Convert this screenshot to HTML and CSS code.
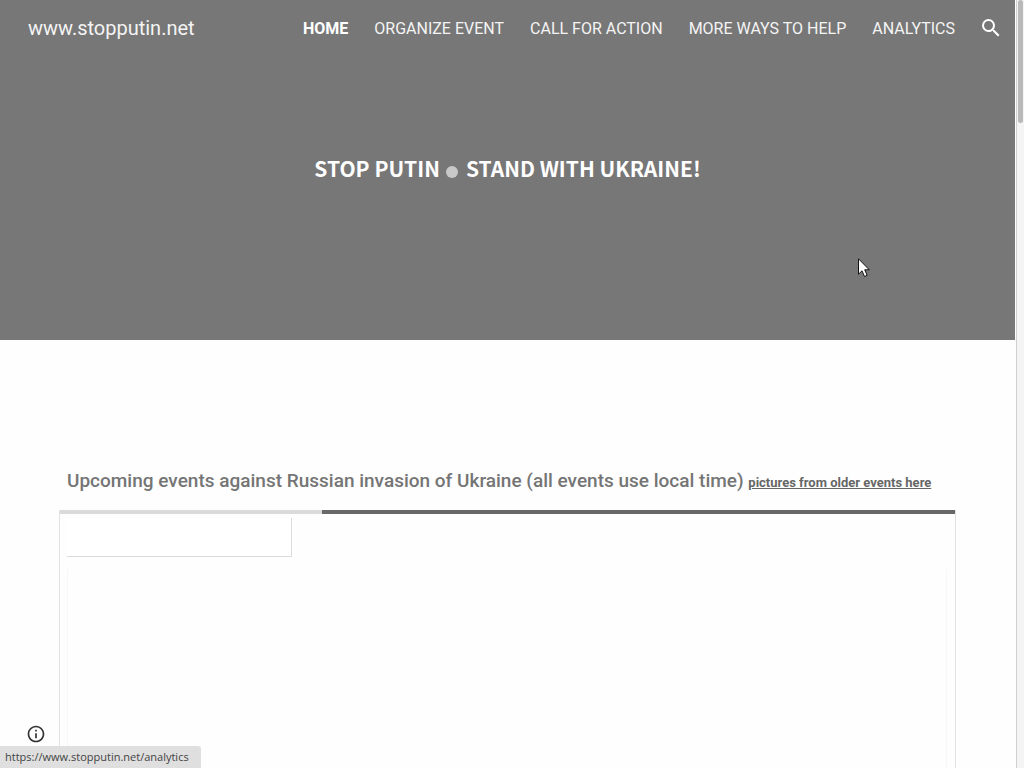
FILE: index.html
```html
<!DOCTYPE html>
<html lang="en">
<head>
  <meta charset="UTF-8">
  <meta name="viewport" content="width=device-width, initial-scale=1.0">
  <title>www.stopputin.net</title>
  <link rel="stylesheet" href="styles.css">
</head>
<body>

  <div class="page">
    <div class="banner">
      <header class="top-bar">
        <a class="site-name" href="#">www.stopputin.net</a>
        <nav class="menu">
          <a class="active" href="#">HOME</a>
          <a href="#">ORGANIZE EVENT</a>
          <a href="#">CALL FOR ACTION</a>
          <a href="#">MORE WAYS TO HELP</a>
          <a href="#">ANALYTICS</a>
        </nav>
        <button class="search-button" aria-label="Search">
          <svg width="24" height="24" viewBox="0 0 24 24" fill="currentColor">
            <path d="M15.5 14h-.79l-.28-.27A6.47 6.47 0 0 0 16 9.5 6.5 6.5 0 1 0 9.5 16c1.61 0 3.09-.59 4.23-1.57l.27.28v.79l5 4.99L20.49 19l-4.99-5zm-6 0C7.01 14 5 11.99 5 9.5S7.01 5 9.5 5 14 7.01 14 9.5 11.99 14 9.5 14z"/>
          </svg>
        </button>
      </header>
      <h1 class="slogan">STOP PUTIN<span class="dot"></span>STAND WITH UKRAINE!</h1>
    </div>

    <main class="content">
      <h2 class="events-title">Upcoming events against Russian invasion of Ukraine (all events use local time) <a href="#">pictures from older events here</a></h2>

      <!-- Events table, still loading -->
      <div class="events-frame">
        <div class="progress"><div class="progress-done"></div></div>
        <div class="frame-body">
          <div class="tab-card"></div>
          <div class="table-card"></div>
        </div>
      </div>
    </main>
  </div>

  <!-- Scrollbar -->
  <div class="scrollbar"><div class="scroll-thumb"></div></div>

  <button class="info-button" aria-label="Site information">
    <svg width="20" height="20" viewBox="0 0 24 24" fill="currentColor">
      <path d="M11 17h2v-6h-2v6zm1-15C6.48 2 2 6.48 2 12s4.480 10 10 10 10-4.480 10-10S17.520 2 12 2zm0 18c-4.410 0-8-3.590-8-8s3.590-8 8-8 8 3.590 8 8-3.590 8-8 8zM11 9h2V7h-2v2z"/>
    </svg>
  </button>

  <div class="link-status">https://www.stopputin.net/analytics</div>

  <svg class="pointer" width="12" height="20" viewBox="0 0 12 20">
    <path d="M.5.8v15.400l3.500-3.400 2.500 5.700 2.700-1.200-2.500-5.500h4.600z" fill="#fff" stroke="#111" stroke-width="1"/>
  </svg>

</body>
</html>
```

FILE: styles.css
```css
body {
  font-family: Roboto, "Liberation Sans", sans-serif;
  margin: 0;
  background-color: #fefefe;
  color: #757575;
  overflow: hidden;
}

a {
  color: inherit;
}

button {
  padding: 0;
  border: none;
  background: none;
  cursor: pointer;
}

svg {
  display: block;
}

.page {
  display: flex;
  flex-direction: column;
  height: 100vh;
  margin-right: 9px;
}

/* Banner */
.banner {
  flex: none;
  display: flex;
  flex-direction: column;
  height: 340px;
  background-color: #777;
  color: #fff;
}

.top-bar {
  display: flex;
  align-items: center;
  height: 56px;
  padding: 0 12px 0 28px;
}

.top-bar a {
  text-decoration: none;
}

.site-name {
  font-size: 20px;
  color: #f4f4f4;
}

.menu {
  display: flex;
  gap: 26px;
  margin-left: auto;
  font-size: 16px;
  color: #f4f4f4;
}

.menu .active {
  font-weight: 700;
  color: #fff;
}

.search-button {
  margin-left: 24px;
  color: #fff;
}

.slogan {
  display: flex;
  justify-content: center;
  align-items: center;
  margin: 96px 0 0;
  font-family: "Noto Sans CJK SC", sans-serif;
  font-size: 21px;
  line-height: 32px;
  font-weight: 700;
}

.dot {
  width: 12px;
  height: 12px;
  margin: 8px 8px 0 6px;
  border-radius: 50%;
  background-color: #c8c8c8;
}

/* Events */
.content {
  flex: 1;
  display: flex;
  flex-direction: column;
  padding: 128px 59px 0;
}

.events-title {
  margin: 0 0 14px;
  padding: 0 8px;
  font-size: 19px;
  line-height: 26px;
  font-weight: 500;
  white-space: nowrap;
}

.events-title a {
  font-size: 13px;
  font-weight: 700;
  color: #666;
}

.events-frame {
  flex: 1;
  display: flex;
  flex-direction: column;
  border: solid #e2e2e2;
  border-width: 0 1px;
}

.progress {
  height: 4px;
  background-color: #686868;
}

.progress-done {
  width: 262px;
  height: 4px;
  background-color: #dadada;
}

.frame-body {
  flex: 1;
  display: flex;
  flex-direction: column;
  gap: 12px;
  padding: 4px 8px 0 7px;
}

.tab-card {
  width: 224px;
  height: 38px;
  border: solid #dcdcdc;
  border-width: 0 1px 1px 0;
  background-color: #fff;
}

.table-card {
  flex: 1;
  border: solid #f7f7f7;
  border-width: 0 1px;
}

/* Browser parts over the page */
.scrollbar {
  position: fixed;
  top: 0;
  right: 0;
  bottom: 0;
  width: 5px;
  border-left: 1px solid #d0d0d0;
  padding: 0 1px;
  background-color: #f4f4f4;
}

.scroll-thumb {
  height: 123px;
  border-radius: 3px;
  background-color: #b9b9b9;
}

.info-button {
  position: fixed;
  left: 26px;
  bottom: 24px;
  color: #333;
}

.link-status {
  position: fixed;
  left: 0;
  bottom: 0;
  padding: 0 12px 0 5px;
  border-radius: 0 3px 0 0;
  background-color: #dfdfdf;
  color: #444;
  font-family: "Open Sans", sans-serif;
  font-size: 11px;
  line-height: 22px;
}

.pointer {
  position: fixed;
  left: 858px;
  top: 258px;
}
```
